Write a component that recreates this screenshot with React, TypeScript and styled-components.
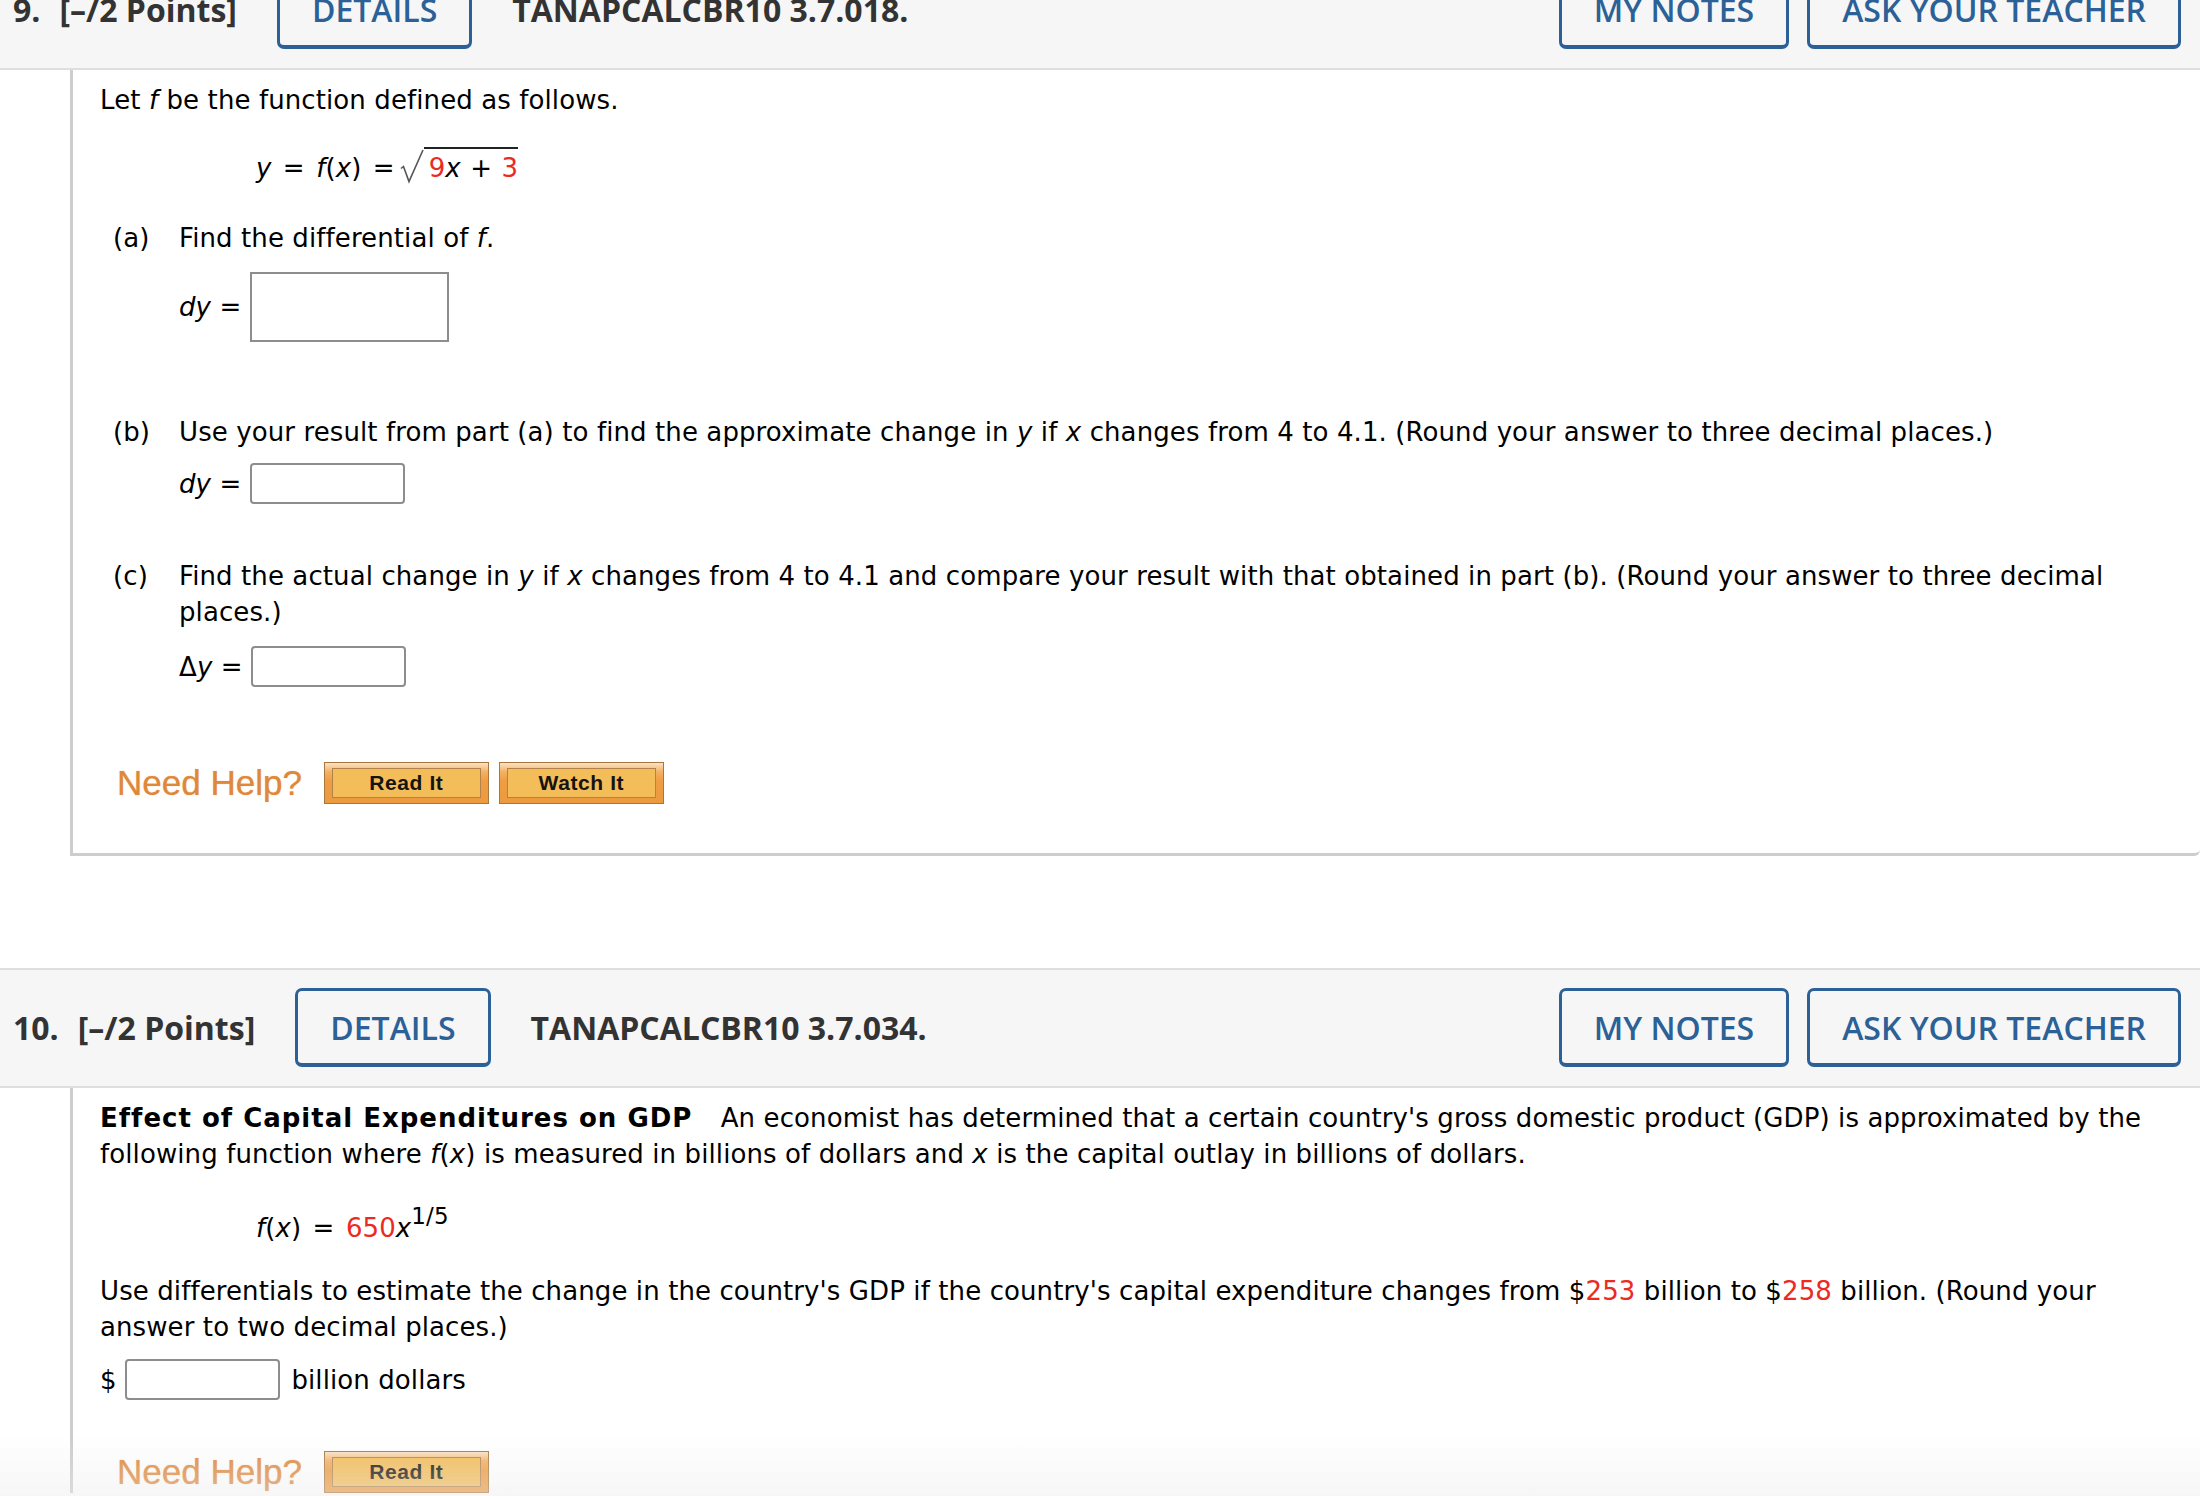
import React from "react";
import styled, { createGlobalStyle } from "styled-components";

const GlobalStyle = createGlobalStyle`
  html, body {
    margin: 0;
    padding: 0;
    background: #ffffff;
  }
  body {
    font-family: "DejaVu Sans", Verdana, sans-serif;
    color: #000;
    overflow: hidden;
  }
`;

const Page = styled.main`
  margin-top: -50px;
  display: flex;
  flex-direction: column;
`;

const Question = styled.section<{ $gapBefore?: number }>`
  margin-top: ${(p) => p.$gapBefore ?? 0}px;
`;

const QHeader = styled.header`
  display: flex;
  align-items: center;
  background: #f6f6f6;
  border-top: 2px solid #dedede;
  border-bottom: 2px solid #dedede;
  padding: 18px 19px 19px 13px;
  font-family: "Open Sans", "Liberation Sans", sans-serif;
  font-size: 32px;
  color: #333333;
`;

const QNumber = styled.span`
  font-weight: 700;
  margin-right: 19px;
`;

const Points = styled.span`
  font-weight: 700;
`;

const QCode = styled.span`
  font-weight: 700;
`;

const HeaderSpacer = styled.div`
  flex: 1;
`;

const HeaderActions = styled.div`
  display: flex;
  gap: 18px;
`;

const HeaderButton = styled.button<{ $inline?: boolean }>`
  box-sizing: border-box;
  height: 79px;
  padding: 0 32px;
  margin: ${(p) => (p.$inline ? "0 40px" : "0")};
  border: 3px solid #2b6196;
  border-bottom-width: 4px;
  border-radius: 7px;
  background: transparent;
  color: #2b6196;
  font-family: "Open Sans", "Liberation Sans", sans-serif;
  font-size: 32px;
  font-weight: 600;
  cursor: pointer;
`;

const QBody = styled.div<{ $closed?: boolean }>`
  margin-left: 70px;
  border-left: 3px solid #cdcdcd;
  border-bottom: ${(p) => (p.$closed ? "3px solid #cdcdcd" : "none")};
  border-bottom-right-radius: 6px;
  padding: ${(p) => (p.$closed ? "12px 35px 49px 27px" : "12px 35px 0 27px")};
  font-size: 26px;
  line-height: 36px;
  letter-spacing: 0.1px;
`;

const Para = styled.p<{ $mt?: number }>`
  margin: ${(p) => p.$mt ?? 0}px 0 0 0;
`;

const MathLine = styled.div<{ $mt?: number }>`
  margin-top: ${(p) => p.$mt ?? 0}px;
  padding-left: 156px;
  white-space: nowrap;
  word-spacing: 3px;
`;

const Var = styled.i`
  font-style: italic;
`;

const Red = styled.span`
  color: #ec2a22;
`;

const Strong = styled.b`
  font-weight: 700;
  letter-spacing: 1px;
  margin-right: 20px;
`;

const RadicalSign = styled.svg`
  width: 24px;
  height: 34px;
  margin-left: 5px;
  vertical-align: -6px;
  overflow: visible;
`;

const Radicand = styled.span`
  border-top: 2px solid #222;
  padding-top: 4px;
  padding-left: 5px;
  word-spacing: 1px;
`;

const Sup = styled.sup`
  font-size: 23px;
  line-height: 0;
  vertical-align: 13px;
`;

const Part = styled.div<{ $mt?: number }>`
  margin-top: ${(p) => p.$mt ?? 0}px;
  margin-left: 13px;
  display: grid;
  grid-template-columns: 66px 1fr;
`;

const PartLabel = styled.span``;

const PartText = styled.span``;

const AnswerRow = styled.div<{ $mt?: number; $indent?: number }>`
  margin-top: ${(p) => p.$mt ?? 0}px;
  margin-left: ${(p) => p.$indent ?? 0}px;
  display: flex;
  align-items: center;
  white-space: pre;
`;

const AnswerInput = styled.input<{ $large?: boolean }>`
  box-sizing: border-box;
  width: ${(p) => (p.$large ? 199 : 155)}px;
  height: ${(p) => (p.$large ? 70 : 41)}px;
  border: 2px solid #8d8d8d;
  border-radius: ${(p) => (p.$large ? 0 : 4)}px;
  background: #fff;
  margin: 0;
  padding: 0 6px;
  font-size: 22px;
`;

const Unit = styled.span`
  margin-left: 3px;
`;

const HelpRow = styled.div<{ $mt?: number }>`
  margin-top: ${(p) => p.$mt ?? 0}px;
  margin-left: 17px;
  display: flex;
  align-items: center;
  letter-spacing: 0;
`;

const HelpLabel = styled.span`
  font-family: "Liberation Sans", Arial, sans-serif;
  font-size: 35px;
  line-height: 42px;
  color: #e0883a;
  text-shadow: 0 0 1px rgba(224, 136, 58, 0.7);
  margin-right: 22px;
`;

const HelpButtons = styled.div`
  display: flex;
  gap: 10px;
`;

const HelpButton = styled.button`
  box-sizing: border-box;
  width: 165px;
  height: 42px;
  padding: 5px 7px;
  border: 1px solid #a8773f;
  background: linear-gradient(
    to bottom,
    #fbe3c6 0%,
    #f3b163 22%,
    #ee9d43 45%,
    #ec9a3f 100%
  );
  cursor: pointer;
  display: flex;
`;

const HelpButtonFace = styled.span`
  flex: 1;
  display: flex;
  align-items: center;
  justify-content: center;
  border: 1px solid #b3824a;
  background: #f3bd5a;
  font-family: "Liberation Sans", Arial, sans-serif;
  font-weight: 700;
  font-size: 21px;
  letter-spacing: 0.6px;
  color: #161310;
`;

const BottomFade = styled.div`
  position: fixed;
  left: 0;
  right: 0;
  bottom: 0;
  height: 60px;
  pointer-events: none;
  background: linear-gradient(
    to bottom,
    rgba(236, 236, 236, 0) 0%,
    rgba(236, 236, 236, 0.45) 100%
  );
`;

type HeaderProps = { num: string; code: string };

const QuestionHeader: React.FC<HeaderProps> = ({ num, code }) => (
  <QHeader>
    <QNumber>{num}</QNumber>
    <Points>[–/2 Points]</Points>
    <HeaderButton $inline>DETAILS</HeaderButton>
    <QCode>{code}</QCode>
    <HeaderSpacer />
    <HeaderActions>
      <HeaderButton>MY NOTES</HeaderButton>
      <HeaderButton>ASK YOUR TEACHER</HeaderButton>
    </HeaderActions>
  </QHeader>
);

const NeedHelp: React.FC<{ mt: number; watch?: boolean }> = ({ mt, watch }) => (
  <HelpRow $mt={mt}>
    <HelpLabel>Need Help?</HelpLabel>
    <HelpButtons>
      <HelpButton>
        <HelpButtonFace>Read It</HelpButtonFace>
      </HelpButton>
      {watch && (
        <HelpButton>
          <HelpButtonFace>Watch It</HelpButtonFace>
        </HelpButton>
      )}
    </HelpButtons>
  </HelpRow>
);

const Radical: React.FC = () => (
  <RadicalSign viewBox="0 0 24 34" aria-hidden="true">
    <polyline
      points="1,19.5 3.5,17.5 9,32.5 23,1"
      fill="none"
      stroke="#555"
      strokeWidth="1.6"
      strokeLinejoin="miter"
    />
  </RadicalSign>
);

export default function App() {
  return (
    <>
      <GlobalStyle />
      <Page>
        <Question>
          <QuestionHeader num="9." code="TANAPCALCBR10 3.7.018." />
          <QBody $closed>
            <Para>
              Let <Var>f</Var> be the function defined as follows.
            </Para>
            <MathLine $mt={31}>
              <Var>y</Var> = <Var>f</Var>(<Var>x</Var>) =
              <Radical />
              <Radicand>
                <Red>9</Red>
                <Var>x</Var> + <Red>3</Red>
              </Radicand>
            </MathLine>
            <Part $mt={34}>
              <PartLabel>(a)</PartLabel>
              <PartText>
                Find the differential of <Var>f</Var>.
              </PartText>
            </Part>
            <AnswerRow $mt={16} $indent={79}>
              <Var>dy</Var>
              {" = "}
              <AnswerInput $large aria-label="dy" />
            </AnswerRow>
            <Part $mt={72}>
              <PartLabel>(b)</PartLabel>
              <PartText>
                Use your result from part (a) to find the approximate change in{" "}
                <Var>y</Var> if <Var>x</Var> changes from 4 to 4.1. (Round your
                answer to three decimal places.)
              </PartText>
            </Part>
            <AnswerRow $mt={13} $indent={79}>
              <Var>dy</Var>
              {" = "}
              <AnswerInput aria-label="dy approx" />
            </AnswerRow>
            <Part $mt={54}>
              <PartLabel>(c)</PartLabel>
              <PartText>
                Find the actual change in <Var>y</Var> if <Var>x</Var> changes
                from 4 to 4.1 and compare your result with that obtained in part
                (b). (Round your answer to three decimal places.)
              </PartText>
            </Part>
            <AnswerRow $mt={16} $indent={79}>
              Δ<Var>y</Var>
              {" = "}
              <AnswerInput aria-label="delta y" />
            </AnswerRow>
            <NeedHelp mt={75} watch />
          </QBody>
        </Question>

        <Question $gapBefore={112}>
          <QuestionHeader num="10." code="TANAPCALCBR10 3.7.034." />
          <QBody>
            <Para>
              <Strong>Effect of Capital Expenditures on GDP</Strong> An economist
              has determined that a certain country's gross domestic product
              (GDP) is approximated by the following function where{" "}
              <Var>f</Var>(<Var>x</Var>) is measured in billions of dollars and{" "}
              <Var>x</Var> is the capital outlay in billions of dollars.
            </Para>
            <MathLine $mt={38}>
              <Var>f</Var>(<Var>x</Var>) = <Red>650</Red>
              <Var>x</Var>
              <Sup>1/5</Sup>
            </MathLine>
            <Para $mt={27}>
              Use differentials to estimate the change in the country's GDP if
              the country's capital expenditure changes from $<Red>253</Red>{" "}
              billion to $<Red>258</Red> billion. (Round your answer to two
              decimal places.)
            </Para>
            <AnswerRow $mt={14}>
              {"$ "}
              <AnswerInput aria-label="billion dollars" />
              <Unit> billion dollars</Unit>
            </AnswerRow>
            <NeedHelp mt={51} />
          </QBody>
        </Question>
      </Page>
      <BottomFade />
    </>
  );
}
